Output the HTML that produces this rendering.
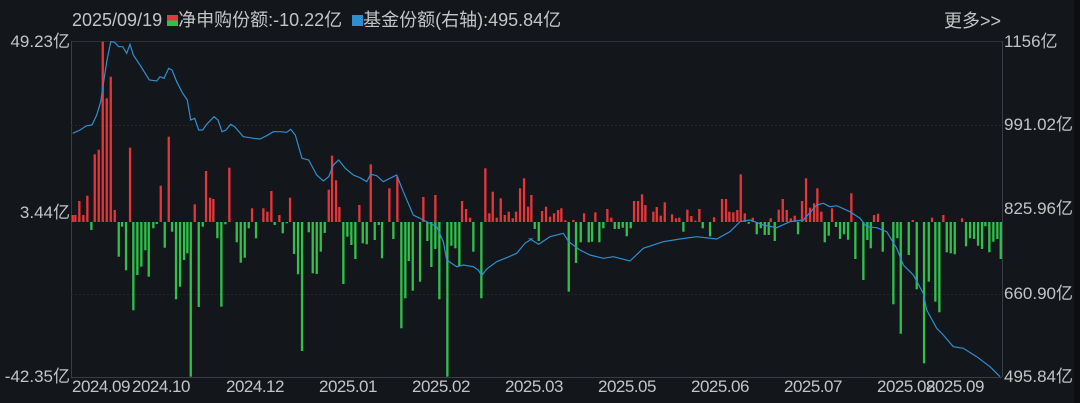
<!DOCTYPE html>
<html><head><meta charset="utf-8"><style>
html,body{margin:0;padding:0;background:#13161b;}
body{width:1080px;height:403px;overflow:hidden;position:relative;font-family:"Liberation Sans","Noto Sans CJK SC",sans-serif;color:#c4c4c4;}
.t{position:absolute;white-space:nowrap;font-size:17px;line-height:18px;}
</style></head><body>
<svg id="c" width="1080" height="403" style="position:absolute;left:0;top:0">
<rect x="1074" y="0" width="6" height="403" fill="#0c0e11"/>
<line x1="71" y1="41.5" x2="1002" y2="41.5" stroke="#2c3036"/>
<line x1="71.5" y1="41" x2="71.5" y2="377" stroke="#3a3e44"/>
<line x1="1002.5" y1="41" x2="1002.5" y2="377" stroke="#3a3e44"/>
<line x1="71" y1="377.5" x2="1002" y2="377.5" stroke="#3a3e44"/>
<line x1="71" y1="125.5" x2="1002" y2="125.5" stroke="#23272c" stroke-dasharray="2,2"/>
<line x1="71" y1="294.5" x2="1002" y2="294.5" stroke="#23272c" stroke-dasharray="2,2"/>
<g id="bars"></g>
<polyline id="ln" fill="none" stroke="#2e8fd0" stroke-width="1.2"/>
</svg>
<div class="t" style="left:72px;top:10px;font-size:18px;line-height:20px">2025/09/19 <span style="display:inline-block;width:11px;height:11px;background:linear-gradient(#e03a3a 50%,#2fbf4a 50%);vertical-align:0"></span>净申购份额:-10.22亿 &nbsp;<span style="display:inline-block;width:11px;height:11px;background:#2e8fd0;vertical-align:0"></span>基金份额(右轴):495.84亿</div>
<div class="t" style="left:944px;top:11px;font-size:18px;line-height:20px">更多&gt;&gt;</div>
<div class="t" style="right:1010px;top:33px">49.23亿</div>
<div class="t" style="right:1010px;top:204px">3.44亿</div>
<div class="t" style="right:1010px;top:368px">-42.35亿</div>
<div class="t" style="left:1004px;top:33px">1156亿</div>
<div class="t" style="left:1004px;top:116px">991.02亿</div>
<div class="t" style="left:1004px;top:200px">825.96亿</div>
<div class="t" style="left:1004px;top:285px">660.90亿</div>
<div class="t" style="left:1004px;top:368px">495.84亿</div>
<div class="t" style="left:72px;top:378px;letter-spacing:-0.5px">2024.09</div>
<div class="t" style="left:132px;top:378px;letter-spacing:-0.5px">2024.10</div>
<div class="t" style="left:226px;top:378px;letter-spacing:-0.5px">2024.12</div>
<div class="t" style="left:319px;top:378px;letter-spacing:-0.5px">2025.01</div>
<div class="t" style="left:412px;top:378px;letter-spacing:-0.5px">2025.02</div>
<div class="t" style="left:505px;top:378px;letter-spacing:-0.5px">2025.03</div>
<div class="t" style="left:598px;top:378px;letter-spacing:-0.5px">2025.05</div>
<div class="t" style="left:691px;top:378px;letter-spacing:-0.5px">2025.06</div>
<div class="t" style="left:784px;top:378px;letter-spacing:-0.5px">2025.07</div>
<div class="t" style="left:877px;top:378px;letter-spacing:-0.5px">2025.08</div>
<div class="t" style="left:926px;top:378px;letter-spacing:-0.5px">2025.09</div>
<script>
var Z=222;
var r1=[[38,540],[46,540],[58,498],[70,540],[82,482],[104,358],[116,344],[128,20],[140,190],[152,125],[164,525],[210,338],[302,452],[326,305],[404,508],[438,408],[450,488],[460,492],[508,398],[576,520],[610,520],[622,530],[634,468],[658,540],[690,488],[806,464],[816,362],[828,436],[838,516],[898,510],[932,388],[988,460],[1012,425],[1090,486],[1126,480],[1206,498],[1218,522],[1230,548],[1276,400],[1288,535],[1298,470],[1310,548],[1322,490],[1334,540],[1346,530],[1358,550],[1368,530],[1380,460],[1392,430],[1404,515],[1414,480]];
var g1=[[94,585],[176,665],[186,575],[198,706],[220,826],[232,720],[244,695],[256,646],[266,725],[280,580],[290,567],[314,638],[336,590],[348,793],[360,755],[372,675],[382,655],[392,1025],[416,816],[428,575],[472,610],[484,815],[496,568],[530,622],[542,683],[554,668],[566,580],[588,610],[644,570],[668,595],[680,565],[702,657],[714,718],[726,948],[746,592],[758,715],[770,717],[782,650],[794,594],[850,747],[862,605],[874,630],[886,672],[908,625],[920,628],[944,615],[956,570],[966,670],[1000,612],[1024,880],[1036,790],[1046,678],[1058,767],[1080,740],[1102,618],[1114,696],[1126,642],[1138,793],[1162,1025],[1174,632],[1186,640],[1198,694],[1240,650],[1264,790]];
var r2=[[36,528],[48,515],[60,545],[72,535],[84,525],[94,520],[106,556],[130,555],[162,535],[196,532],[232,522],[244,548],[312,498],[324,498],[336,478],[346,510],[370,530],[380,516],[392,542],[404,502],[426,538],[438,550],[448,548],[472,524],[484,543],[496,557],[508,522],[552,547],[576,492],[588,492],[598,530],[610,532],[622,525],[632,418],[644,535],[668,548],[722,550],[746,524],[758,492],[770,525],[782,550],[794,542],[816,498],[828,430],[840,518],[852,505],[862,460],[874,530],[906,520],[964,475],[1032,540],[1044,536],[1148,555],[1206,548],[1240,540],[1296,550]];
var g2=[[14,582],[26,618],[116,770],[138,684],[152,622],[176,622],[186,620],[208,622],[220,580],[254,582],[266,582],[278,578],[290,604],[302,580],[460,590],[518,580],[540,604],[656,566],[680,598],[692,580],[704,600],[716,600],[734,618],[804,598],[884,622],[896,602],[918,576],[930,612],[942,598],[954,614],[976,672],[1000,735],[1012,615],[1022,640],[1058,650],[1090,808],[1102,610],[1112,896],[1136,660],[1160,763],[1182,985],[1196,740],[1216,800],[1228,832],[1250,652],[1262,655],[1274,658],[1308,634],[1320,610],[1332,612],[1344,632],[1356,642],[1366,574],[1378,652],[1390,620],[1402,612],[1412,672]];
var s='';
function add(a,ox,col){a.forEach(function(p){var x=ox+p[0]/3-1.1,y=35+p[1]/3;var y0=Math.min(y,Z),h=Math.max(1,Math.abs(y-Z));s+='<rect x="'+x.toFixed(1)+'" y="'+y0.toFixed(1)+'" width="2.3" height="'+h.toFixed(1)+'" fill="'+col+'"/>';});}
add(r1,60,'#e8353a');add(g1,60,'#2fc24a');add(r2,530,'#e8353a');add(g2,530,'#2fc24a');
document.getElementById('bars').innerHTML=s;
var l1=[[38,295],[60,285],[80,272],[96,270],[110,240],[122,200],[140,80],[152,20],[164,22],[176,35],[188,35],[200,55],[210,28],[220,60],[240,90],[268,135],[290,138],[300,125],[312,130],[326,100],[336,105],[350,140],[368,175],[382,195],[392,255],[404,250],[416,285],[428,285],[440,268],[462,245],[474,255],[486,290],[498,285],[512,268],[524,275],[550,305],[570,308],[580,310],[600,312],[620,302],[640,290],[660,290],[680,292],[692,283],[706,300],[726,370],[746,375],[770,420],[790,438],[806,425],[820,390],[836,375],[856,400],[880,420],[900,428],[920,440],[932,418],[950,422],[970,440],[990,430],[1010,420],[1030,470],[1060,540],[1090,555],[1110,565],[1130,575],[1150,620],[1160,675],[1190,695],[1210,690],[1240,695],[1255,705],[1265,722],[1280,702],[1310,680],[1340,668],[1370,655],[1395,625],[1415,612]];
var l2=[[0,612],[26,628],[60,605],[100,595],[116,620],[150,645],[180,660],[220,670],[250,665],[300,678],[340,640],[400,620],[450,612],[500,605],[560,612],[600,590],[630,560],[660,555],[700,570],[740,578],[780,560],[820,555],[860,510],[880,505],[900,515],[920,512],[960,530],[990,550],[1010,575],[1040,578],[1070,590],[1100,640],[1120,690],[1150,720],[1180,775],[1190,825],[1220,880],[1240,900],[1270,935],[1300,940],[1340,965],[1380,995],[1410,1025]];
var pts=l1.map(function(p){return (60+p[0]/3).toFixed(1)+','+(35+p[1]/3).toFixed(1)}).concat(l2.map(function(p){return (530+p[0]/3).toFixed(1)+','+(35+p[1]/3).toFixed(1)}));
document.getElementById('ln').setAttribute('points',pts.join(' '));
</script>
</body></html>
